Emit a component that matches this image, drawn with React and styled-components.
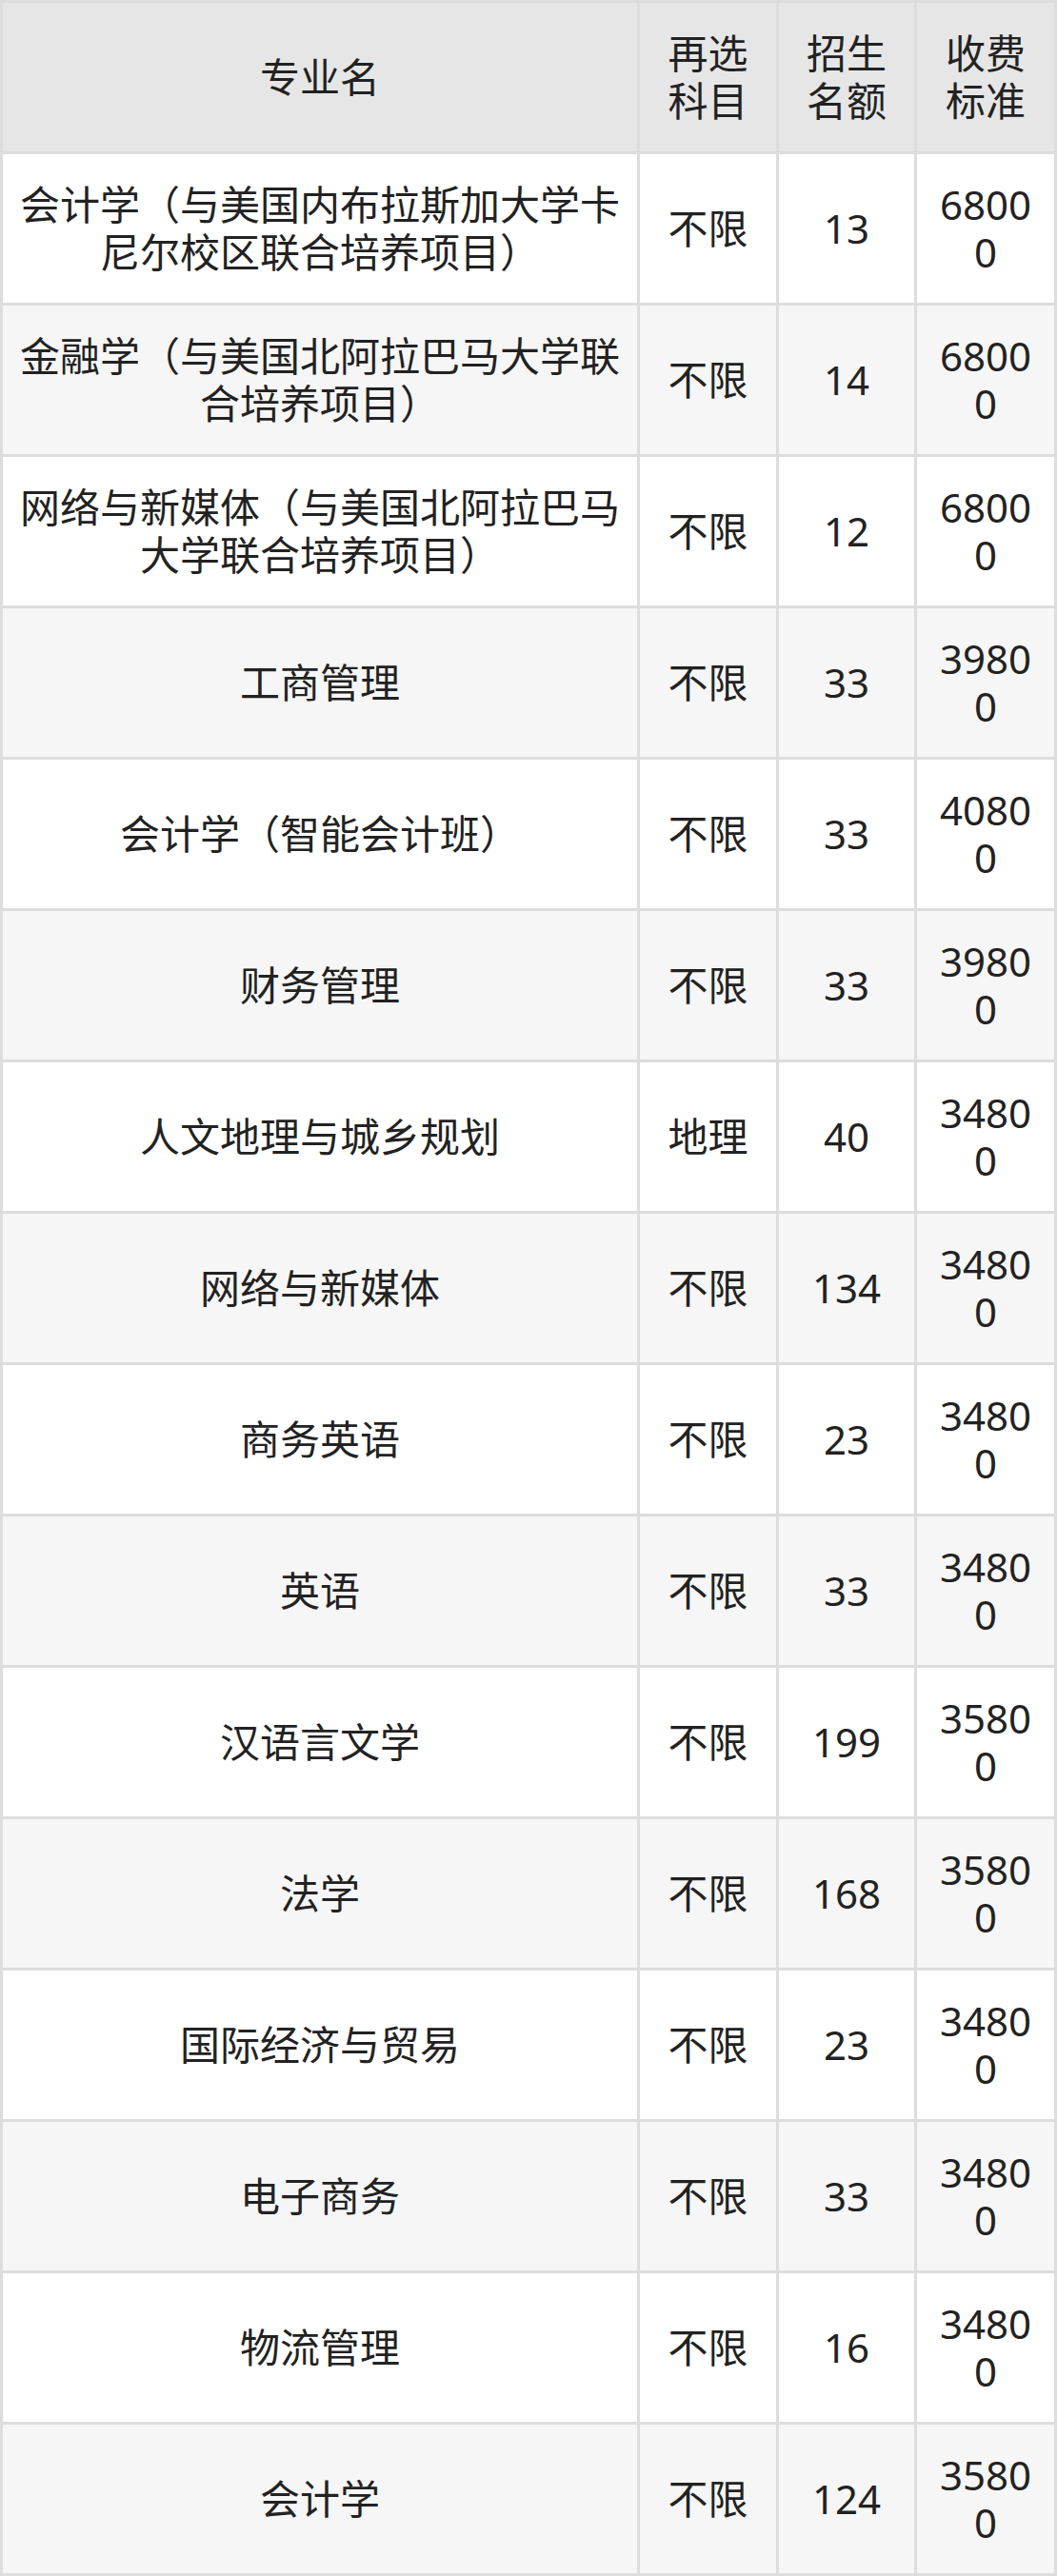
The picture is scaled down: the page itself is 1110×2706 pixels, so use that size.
import React from "react";
import styled, { createGlobalStyle } from "styled-components";

const GlobalStyle = createGlobalStyle`
  html, body {
    margin: 0;
    padding: 0;
    background: #ffffff;
  }
  body {
    font-family: "Noto Sans", "Open Sans", "Noto Sans CJK SC", sans-serif;
    color: #222222;
  }
`;

const Table = styled.div`
  display: grid;
  grid-template-columns: 666px 143px 142px 144px;
  grid-auto-rows: 156px;
  gap: 3px;
  padding: 3px;
  width: 1110px;
  box-sizing: border-box;
  background: #dddddd;
`;

const Row = styled.div`
  display: contents;
`;

const Cell = styled.div`
  display: flex;
  align-items: center;
  justify-content: center;
  padding: 0 16px;
  box-sizing: border-box;
  text-align: center;
  font-size: 42px;
  line-height: 50px;
  color: #222222;
  word-break: break-all;
  background: ${(p) => (p.$head ? "#e6e6e6" : p.$alt ? "#f6f6f6" : "#ffffff")};
`;

const Text = styled.span`
  display: block;
  width: 100%;
`;

const header = ["专业名", "再选科目", "招生名额", "收费标准"];

const rows = [
  ["会计学（与美国内布拉斯加大学卡尼尔校区联合培养项目）", "不限", "13", "68000"],
  ["金融学（与美国北阿拉巴马大学联合培养项目）", "不限", "14", "68000"],
  ["网络与新媒体（与美国北阿拉巴马大学联合培养项目）", "不限", "12", "68000"],
  ["工商管理", "不限", "33", "39800"],
  ["会计学（智能会计班）", "不限", "33", "40800"],
  ["财务管理", "不限", "33", "39800"],
  ["人文地理与城乡规划", "地理", "40", "34800"],
  ["网络与新媒体", "不限", "134", "34800"],
  ["商务英语", "不限", "23", "34800"],
  ["英语", "不限", "33", "34800"],
  ["汉语言文学", "不限", "199", "35800"],
  ["法学", "不限", "168", "35800"],
  ["国际经济与贸易", "不限", "23", "34800"],
  ["电子商务", "不限", "33", "34800"],
  ["物流管理", "不限", "16", "34800"],
  ["会计学", "不限", "124", "35800"],
];

export default function App() {
  return (
    <>
      <GlobalStyle />
      <Table>
        <Row>
          {header.map((h) => (
            <Cell key={h} $head>
              <Text>{h}</Text>
            </Cell>
          ))}
        </Row>
        {rows.map((r, i) => (
          <Row key={i}>
            {r.map((c, j) => (
              <Cell key={j} $alt={i % 2 === 1}>
                <Text>{c}</Text>
              </Cell>
            ))}
          </Row>
        ))}
      </Table>
    </>
  );
}
